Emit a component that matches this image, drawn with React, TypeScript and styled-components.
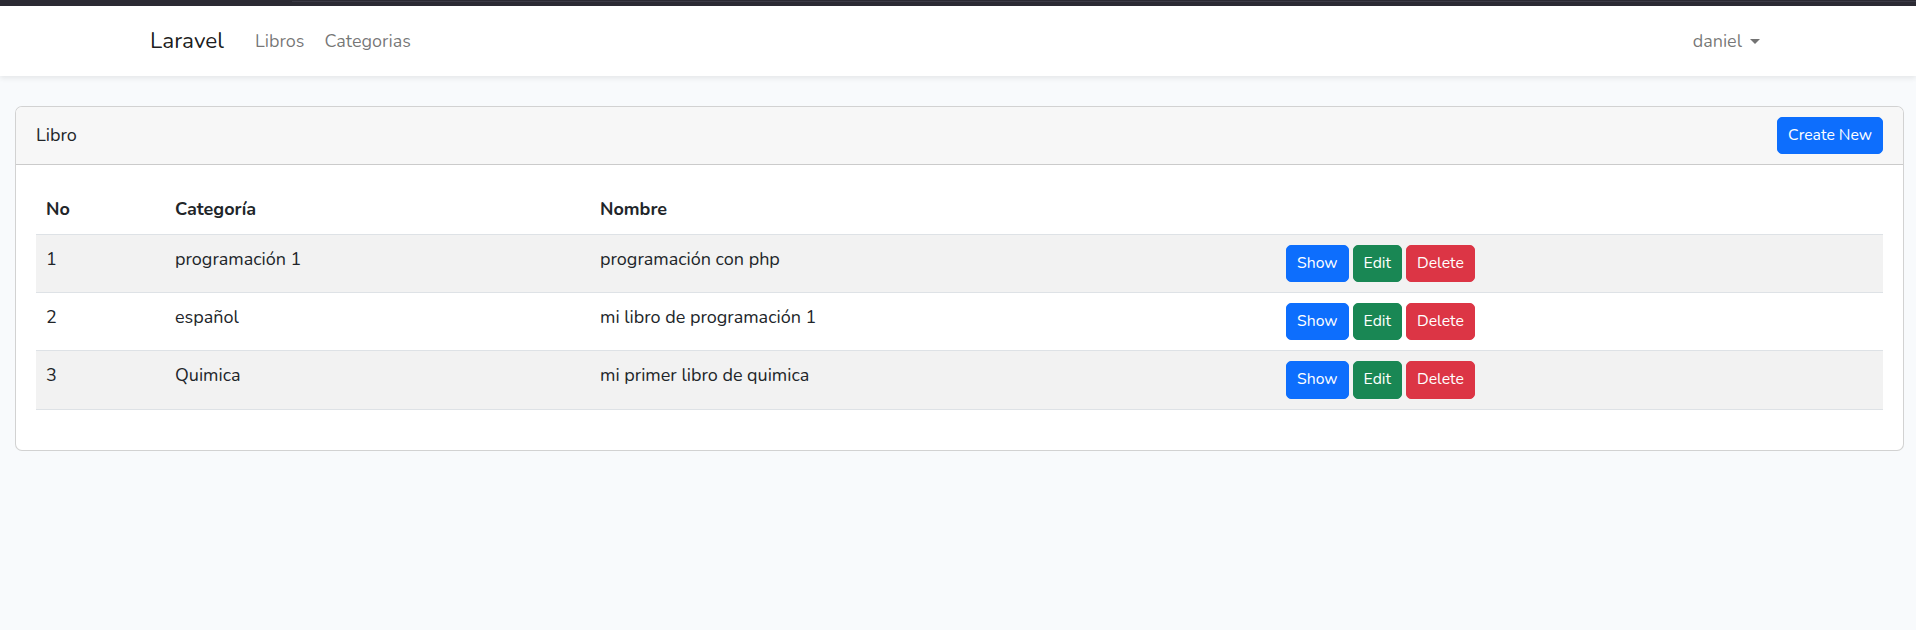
import React from "react";
import styled, { createGlobalStyle } from "styled-components";

const FONT = `"Nunito", "Lato", "Noto Sans", sans-serif`;

const GlobalStyle = createGlobalStyle`
  html, body { margin: 0; padding: 0; }
  body {
    background: #f8fafc;
    font-family: ${FONT};
    font-size: 18px;
    line-height: 1.6;
    color: #212529;
  }
  * { box-sizing: border-box; }
`;

const Page = styled.div`
  min-height: 630px;
  background: #f8fafc;
`;

const TopStrip = styled.div`
  position: relative;
  height: 6px;
  background: #2b2a33;
  &::after {
    content: "";
    position: absolute;
    left: 292px;
    right: 0;
    top: 1px;
    height: 1px;
    background: #3b3a45;
  }
`;

const Navbar = styled.nav`
  background: #fff;
  height: 70px;
  box-shadow: 0 2.5px 5px rgba(0, 0, 0, 0.075);
  display: flex;
  justify-content: center;
`;

const NavContainer = styled.div`
  width: 1650px;
  padding: 0 13px 0 17px;
  display: flex;
  align-items: center;
`;

const Brand = styled.a`
  font-size: 22.5px;
  color: rgba(0, 0, 0, 0.9);
  margin-right: 21px;
  text-decoration: none;
  line-height: 1.6;
`;

const NavList = styled.div`
  display: flex;
  align-items: center;
`;

const NavLink = styled.a`
  padding: 10px;
  color: rgba(0, 0, 0, 0.55);
  text-decoration: none;
`;

const Spacer = styled.div`
  flex: 1;
`;

const Caret = styled.span`
  display: inline-block;
  margin-left: 8px;
  vertical-align: 3px;
  border-top: 5.4px solid;
  border-left: 5.4px solid transparent;
  border-right: 5.4px solid transparent;
`;

const Main = styled.main`
  padding: 30px 12px 30px 15px;
`;

const Card = styled.section`
  background: #fff;
  border: 1px solid rgba(0, 0, 0, 0.175);
  border-radius: 7px;
  overflow: hidden;
`;

const CardHeader = styled.header`
  background: #f7f7f7;
  border-bottom: 1px solid rgba(0, 0, 0, 0.175);
  padding: 10px 20px;
  display: flex;
  align-items: center;
  justify-content: space-between;
`;

const CardBody = styled.div`
  padding: 20px;
`;

const Table = styled.table`
  width: 100%;
  border-collapse: collapse;
  table-layout: fixed;
  margin-bottom: 20px;
`;

const Th = styled.th`
  text-align: left;
  font-weight: 700;
  padding: 10px;
  border-bottom: 1px solid #dee2e6;
  vertical-align: bottom;
`;

const Row = styled.tr<{ $striped?: boolean }>`
  background: ${(p) => (p.$striped ? "#f2f2f2" : "#fff")};
`;

const Td = styled.td`
  padding: 10px;
  border-bottom: 1px solid #dee2e6;
  vertical-align: top;
`;

const Actions = styled.div`
  display: flex;
  gap: 4px;
  padding-left: 1px;
`;

const colors: Record<string, string> = {
  primary: "#0d6efd",
  success: "#198754",
  danger: "#dc3545",
};

const Btn = styled.button<{ $variant: "primary" | "success" | "danger" }>`
  font-family: ${FONT};
  font-size: 15.75px;
  line-height: 1.6;
  padding: 5px 10px;
  border: 1px solid ${(p) => colors[p.$variant]};
  background: ${(p) => colors[p.$variant]};
  color: #fff;
  border-radius: 5px;
  cursor: pointer;
`;

const rows = [
  { no: 1, cat: "programación 1", name: "programación con php" },
  { no: 2, cat: "español", name: "mi libro de programación 1" },
  { no: 3, cat: "Quimica", name: "mi primer libro de quimica" },
];

export default function App() {
  return (
    <Page>
      <GlobalStyle />
      <TopStrip />
      <Navbar>
        <NavContainer>
          <Brand href="#">Laravel</Brand>
          <NavList>
            <NavLink href="#">Libros</NavLink>
            <NavLink href="#">Categorias</NavLink>
          </NavList>
          <Spacer />
          <NavLink href="#">
            daniel
            <Caret />
          </NavLink>
        </NavContainer>
      </Navbar>
      <Main>
        <Card>
          <CardHeader>
            <span>Libro</span>
            <Btn $variant="primary">Create New</Btn>
          </CardHeader>
          <CardBody>
            <Table>
              <colgroup>
                <col style={{ width: 129 }} />
                <col style={{ width: 425 }} />
                <col style={{ width: 685 }} />
                <col />
              </colgroup>
              <thead>
                <tr>
                  <Th>No</Th>
                  <Th>Categoría</Th>
                  <Th>Nombre</Th>
                  <Th></Th>
                </tr>
              </thead>
              <tbody>
                {rows.map((r, i) => (
                  <Row key={r.no} $striped={i % 2 === 0}>
                    <Td>{r.no}</Td>
                    <Td>{r.cat}</Td>
                    <Td>{r.name}</Td>
                    <Td>
                      <Actions>
                        <Btn $variant="primary">Show</Btn>
                        <Btn $variant="success">Edit</Btn>
                        <Btn $variant="danger">Delete</Btn>
                      </Actions>
                    </Td>
                  </Row>
                ))}
              </tbody>
            </Table>
          </CardBody>
        </Card>
      </Main>
    </Page>
  );
}
